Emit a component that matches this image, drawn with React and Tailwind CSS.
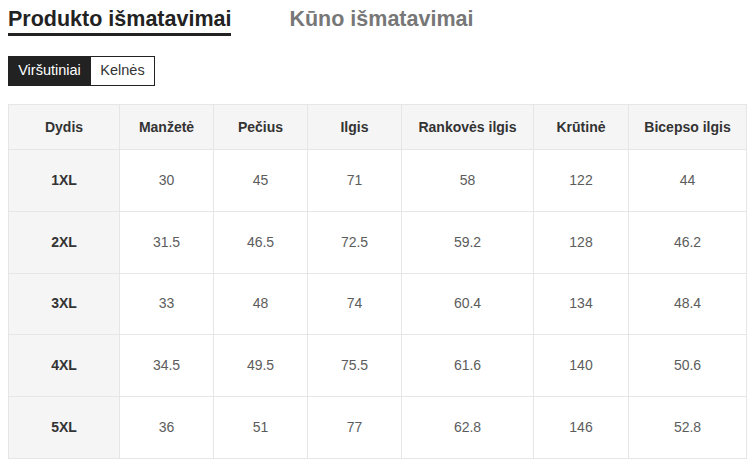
import React, { useState } from "react";

const columns = ["Dydis", "Manžetė", "Pečius", "Ilgis", "Rankovės ilgis", "Krūtinė", "Bicepso ilgis"];
const widths = ["w-[111px]", "w-[94px]", "w-[94px]", "w-[94px]", "w-[132px]", "w-[95px]", "w-[118px]"];

const rows = [
  ["1XL", "30", "45", "71", "58", "122", "44"],
  ["2XL", "31.5", "46.5", "72.5", "59.2", "128", "46.2"],
  ["3XL", "33", "48", "74", "60.4", "134", "48.4"],
  ["4XL", "34.5", "49.5", "75.5", "61.6", "140", "50.6"],
  ["5XL", "36", "51", "77", "62.8", "146", "52.8"],
];

export default function App() {
  const [tab, setTab] = useState("produkto");
  const [type, setType] = useState("top");

  const tabClass = (active) =>
    active
      ? "text-[21.5px] leading-[25px] font-bold text-[#222] border-b-[3px] border-[#222] pb-[1px]"
      : "text-[21.5px] leading-[25px] font-bold text-[#777] pb-[4px]";

  const typeClass = (active) =>
    active ? "bg-[#222] text-white border-[#222]" : "bg-white text-[#333] border-[#222]";

  return (
    <div className="bg-white min-h-screen px-2 pt-[7px] font-['Liberation_Sans',Arial,sans-serif]">
      {/* Tabs */}
      <div className="flex items-start gap-[58px]">
        <button onClick={() => setTab("produkto")} className={tabClass(tab === "produkto")}>
          Produkto išmatavimai
        </button>
        <button onClick={() => setTab("kuno")} className={tabClass(tab === "kuno")}>
          Kūno išmatavimai
        </button>
      </div>

      {/* Category toggle */}
      <div className="mt-[20px] flex">
        <button
          onClick={() => setType("top")}
          className={typeClass(type === "top") + " h-[30px] w-[83px] border text-[14.5px]"}
        >
          Viršutiniai
        </button>
        <button
          onClick={() => setType("pants")}
          className={typeClass(type === "pants") + " h-[30px] w-[64px] border border-l-0 text-[14.5px]"}
        >
          Kelnės
        </button>
      </div>

      {/* Size table */}
      <table className="mt-[18px] border-collapse table-fixed w-[738px] text-[14px]">
        <thead>
          <tr className="bg-[#f5f5f5] h-[45px]">
            {columns.map((c, i) => (
              <th key={c} className={`${widths[i]} border border-[#e6e6e6] font-bold text-[#333] text-center`}>
                {c}
              </th>
            ))}
          </tr>
        </thead>
        <tbody>
          {rows.map((r) => (
            <tr key={r[0]} className="h-[61.8px]">
              {r.map((v, i) =>
                i === 0 ? (
                  <td key={i} className="border border-[#e6e6e6] bg-[#f5f5f5] font-bold text-[#333] text-center">
                    {v}
                  </td>
                ) : (
                  <td key={i} className="border border-[#e6e6e6] text-[#5c5c5c] text-center">
                    {v}
                  </td>
                )
              )}
            </tr>
          ))}
        </tbody>
      </table>
    </div>
  );
}
